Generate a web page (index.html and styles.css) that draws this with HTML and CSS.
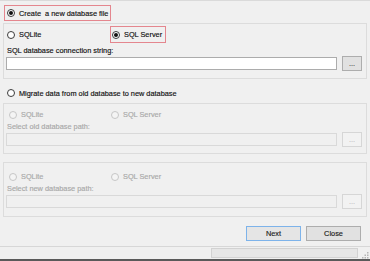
FILE: index.html
```html
<!DOCTYPE html>
<html>
<head>
<meta charset="utf-8">
<link rel="stylesheet" href="styles.css">
</head>
<body>
<div class="win">
  <div class="content">
    <div class="opt hl top-opt"><span class="radio checked"></span><span class="txt">Create  a new database file</span></div>
    <div class="group g1">
      <div class="radios">
        <div class="opt o-left"><span class="radio"></span><span class="txt">SQLite</span></div>
        <div class="opt hl o-right"><span class="radio checked"></span><span class="txt">SQL Server</span></div>
      </div>
      <div class="lbl">SQL database connection string:</div>
      <div class="path-row">
        <div class="input"></div>
        <div class="dots">...</div>
      </div>
    </div>
    <div class="opt migrate"><span class="radio"></span><span class="txt">Migrate data from old database to new database</span></div>
    <div class="group g2 disabled">
      <div class="radios">
        <div class="opt o-left"><span class="radio"></span><span class="txt">SQLite</span></div>
        <div class="opt o-right"><span class="radio"></span><span class="txt">SQL Server</span></div>
      </div>
      <div class="lbl">Select old database path:</div>
      <div class="path-row">
        <div class="input"></div>
        <div class="dots">...</div>
      </div>
    </div>
    <div class="group g3 disabled">
      <div class="radios">
        <div class="opt o-left"><span class="radio"></span><span class="txt">SQLite</span></div>
        <div class="opt o-right"><span class="radio"></span><span class="txt">SQL Server</span></div>
      </div>
      <div class="lbl">Select new database path:</div>
      <div class="path-row">
        <div class="input"></div>
        <div class="dots">...</div>
      </div>
    </div>
    <div class="buttons">
      <div class="btn default">Next</div>
      <div class="btn">Close</div>
    </div>
  </div>
  <div class="status">
    <div class="progress"></div>
    <svg class="grip" width="7" height="7" viewBox="0 0 7 7">
      <rect x="5" y="0" width="1.5" height="1.5" fill="#b4b4b4"/>
      <rect x="2.5" y="2.5" width="1.5" height="1.5" fill="#b4b4b4"/>
      <rect x="5" y="2.5" width="1.5" height="1.5" fill="#b4b4b4"/>
      <rect x="0" y="5" width="1.5" height="1.5" fill="#b4b4b4"/>
      <rect x="2.5" y="5" width="1.5" height="1.5" fill="#b4b4b4"/>
      <rect x="5" y="5" width="1.5" height="1.5" fill="#b4b4b4"/>
    </svg>
  </div>
</div>
</body>
</html>
```

FILE: styles.css
```css
html, body {
  margin: 0;
  padding: 0;
}
body {
  background: #f0f0f0;
  font-family: "Liberation Sans", Arial, sans-serif;
  font-size: 7.35px;
  color: #111;
  -webkit-text-stroke: 0.15px currentColor;
}
.win {
  width: 370px;
  height: 261px;
  box-sizing: border-box;
  border-top: 1px solid #dadada;
  display: flex;
  flex-direction: column;
  overflow: hidden;
}
.content {
  flex: 1;
  padding: 0 3px;
  display: flex;
  flex-direction: column;
}
.opt {
  display: flex;
  align-items: center;
  gap: 4px;
  box-sizing: border-box;
  white-space: pre;
}
.hl {
  border: 1px solid #e4868e;
}
.radio {
  width: 8px;
  height: 8px;
  box-sizing: border-box;
  border-radius: 50%;
  border: 1px solid #3c3c3c;
  background: #fff;
  position: relative;
  flex: none;
}
.radio.checked::after {
  content: "";
  position: absolute;
  left: 1px;
  top: 1px;
  width: 4px;
  height: 4px;
  border-radius: 50%;
  background: #111;
}
.top-opt {
  margin: 4px 0 0 1px;
  width: 107px;
  height: 16px;
  padding-left: 2px;
}
.group {
  box-sizing: border-box;
  border: 1px solid #dcdcdc;
  padding: 0 4px 0 2px;
  display: flex;
  flex-direction: column;
}
.radios {
  display: flex;
}
.o-left {
  width: 104px;
  padding-left: 1px;
}
.o-right {
  padding-left: 1px;
}
.g1 {
  margin-top: 2px;
  height: 56px;
  padding-top: 2px;
}
.g1 .radios {
  height: 17px;
}
.g1 .o-right {
  width: 56px;
  height: 17px;
}
.lbl {
  height: 10px;
  line-height: 10px;
  padding-left: 1px;
  white-space: nowrap;
}
.g1 .lbl {
  margin-top: 3px;
}
.path-row {
  display: flex;
  align-items: center;
  gap: 5px;
  height: 15px;
}
.input {
  width: 331px;
  height: 13px;
  box-sizing: border-box;
  border: 1px solid #acacac;
  background: #fff;
}
.dots {
  width: 20px;
  height: 15px;
  box-sizing: border-box;
  border: 1px solid #adadad;
  background: #e1e1e1;
  text-align: center;
  line-height: 13px;
  color: #333;
}
.migrate {
  margin-top: 6px;
  height: 16px;
  padding-left: 4px;
}
.g2 {
  margin-top: 2px;
  height: 51px;
  padding-top: 4px;
}
.g3 {
  margin-top: 8px;
  height: 55px;
  padding-top: 7px;
}
.disabled .radios {
  height: 13px;
}
.disabled .o-left {
  padding-left: 3px;
}
.disabled .lbl {
  margin-top: 1px;
}
.disabled {
  color: #a8a8a8;
}
.disabled .radio {
  border-color: #c6c6c6;
  background: #f4f4f4;
}
.disabled .input {
  border-color: #d9d9d9;
  background: #f0f0f0;
}
.disabled .dots {
  border-color: #d6d6d6;
  background: #f2f2f2;
  color: #bdbdbd;
}
.buttons {
  margin-top: 9px;
  display: flex;
  justify-content: flex-end;
  gap: 5px;
  padding-right: 6px;
}
.btn {
  width: 55px;
  height: 15px;
  box-sizing: border-box;
  border: 1px solid #adadad;
  background: #e1e1e1;
  text-align: center;
  line-height: 13px;
  color: #1a1a1a;
}
.btn.default {
  border-color: #7db3ea;
  background: #e5e5e5;
}
.status {
  height: 15px;
  box-sizing: border-box;
  border-top: 1px solid #d7d7d7;
  border-bottom: 2px solid #5a5a5a;
  display: flex;
  align-items: center;
  justify-content: flex-end;
  padding-right: 1px;
  gap: 4px;
}
.progress {
  width: 147px;
  height: 10px;
  box-sizing: border-box;
  border: 1px solid #d2d2d2;
  background: #e6e6e6;
}
.grip {
  align-self: flex-end;
  margin-bottom: 0px;
}
```
